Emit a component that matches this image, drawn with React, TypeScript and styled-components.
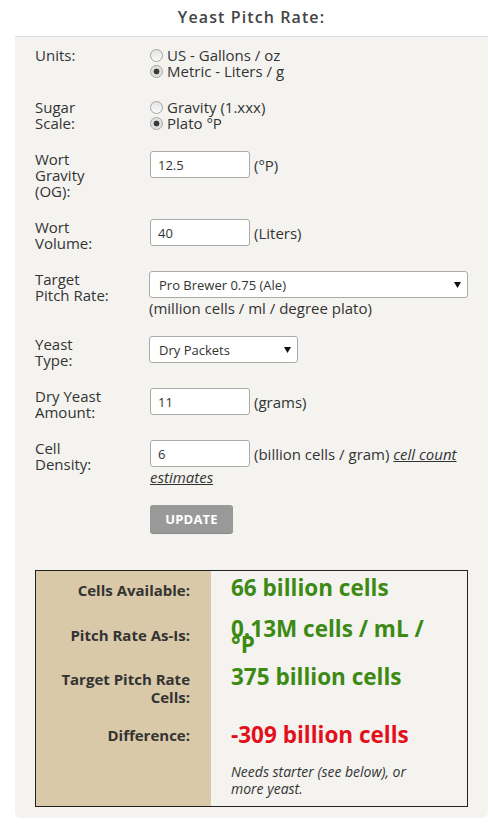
import React from "react";
import styled, { createGlobalStyle } from "styled-components";

const GlobalStyle = createGlobalStyle`
  html, body { margin: 0; padding: 0; background: #fff; }
  body {
    font-family: "Open Sans", "Liberation Sans", sans-serif;
    color: #333;
    font-size: 15px;
    line-height: 16px;
  }
`;

const Panel = styled.section`
  margin: 0 10px 10px 15px;
  background: #f4f3f0;
  border-radius: 0 0 6px 6px;
`;

const Header = styled.h2`
  margin: 0;
  height: 37px;
  box-sizing: border-box;
  padding-bottom: 2px;
  background: #fff;
  border-bottom: 1px solid #dcdcdc;
  display: flex;
  align-items: center;
  justify-content: center;
  font-size: 16px;
  font-weight: 600;
  letter-spacing: 1.1px;
  color: #444;
`;

const Body = styled.div`
  padding: 10px 20px 11px 20px;
`;

const FormRow = styled.div<{ $gap?: number }>`
  display: grid;
  grid-template-columns: 115px 1fr;
  align-items: start;
  margin-bottom: ${(p) => p.$gap ?? 20}px;
`;

const Label = styled.div`
  max-width: 75px;
  line-height: 16px;
`;

const Controls = styled.div`
  line-height: 16px;
`;

const RadioGroup = styled.div`
  display: flex;
  flex-direction: column;
`;

const RadioOption = styled.label`
  display: flex;
  align-items: center;
  gap: 4px;
  height: 16px;
`;

const RadioCircle = styled.span<{ $checked?: boolean }>`
  width: 13px;
  height: 13px;
  box-sizing: border-box;
  border-radius: 50%;
  border: 1px solid #a3a3a3;
  background: ${(p) =>
    p.$checked
      ? "radial-gradient(circle, #3a3a3a 0 2.6px, #d8d8d8 3.2px, #f4f4f4 100%)"
      : "linear-gradient(#e2e2e2, #fbfbfb)"};
  flex: none;
`;

const TextInput = styled.input`
  width: 100px;
  height: 27px;
  box-sizing: border-box;
  border: 1px solid #aaa;
  border-radius: 3px;
  padding: 0 7px;
  font-family: "Open Sans", "Liberation Sans", sans-serif;
  font-size: 13px;
  color: #333;
  background: #fff;
  vertical-align: middle;
  margin: 0;
`;

const Unit = styled.span`
  margin-left: 4px;
  vertical-align: middle;
`;

const SelectWrap = styled.div<{ $w: number }>`
  position: relative;
  width: ${(p) => p.$w}px;
  margin-left: -1px;
`;

const Select = styled.select`
  appearance: none;
  -webkit-appearance: none;
  width: 100%;
  height: 27px;
  box-sizing: border-box;
  border: 1px solid #aaa;
  border-radius: 3px;
  padding: 0 24px 0 9px;
  font-family: "Open Sans", "Liberation Sans", sans-serif;
  font-size: 13px;
  color: #333;
  background: #fff;
  margin: 0;
  display: block;
`;

const Arrow = styled.svg`
  position: absolute;
  right: 7px;
  top: 11px;
  width: 7px;
  height: 6px;
  pointer-events: none;
`;

const Helper = styled.div`
  margin-top: 2px;
  margin-left: -1px;
`;

const Link = styled.a`
  color: #333;
  font-style: italic;
  text-decoration: underline;
`;

const Button = styled.button`
  width: 83px;
  height: 28px;
  border: none;
  border-radius: 3px;
  background: #999;
  box-shadow: 0 1px 0 #8a8a8a;
  color: #fff;
  font-family: "Open Sans", "Liberation Sans", sans-serif;
  font-size: 13px;
  font-weight: 700;
  letter-spacing: 0.2px;
  padding: 0;
`;

const ResultBox = styled.div`
  border: 1px solid #222;
  display: grid;
  grid-template-columns: 175px 1fr;
  grid-template-rows: 41px 48px 58px 36px 52px;
`;

const ResultLabel = styled.div`
  background: #d9c9a8;
  display: flex;
  align-items: center;
  justify-content: flex-end;
  text-align: right;
  padding: 0 21px 2px 12px;
  font-size: 15px;
  font-weight: 700;
  line-height: 18px;
  color: #333;
`;

const ResultValue = styled.div<{ $tone: "good" | "bad" }>`
  padding: 9px 30px 0 20px;
  font-size: 22.5px;
  font-weight: 700;
  line-height: 16px;
  color: ${(p) => (p.$tone === "bad" ? "#e3101b" : "#3c8a14")};
`;

const Note = styled.div`
  display: flex;
  align-items: center;
  padding: 0 30px 0 20px;
  font-style: italic;
  font-size: 14px;
  line-height: 17px;
  color: #333;
`;

const Radio = ({ checked, children }: { checked?: boolean; children: React.ReactNode }) => (
  <RadioOption>
    <RadioCircle $checked={checked} />
    <span>{children}</span>
  </RadioOption>
);

const DropArrow = () => (
  <Arrow viewBox="0 0 7 6">
    <polygon points="0,0 7,0 3.5,6" fill="#111" />
  </Arrow>
);

export default function App() {
  return (
    <>
      <GlobalStyle />
      <Panel>
        <Header>Yeast Pitch Rate:</Header>
        <Body>
          <FormRow>
            <Label>Units:</Label>
            <RadioGroup>
              <Radio>US - Gallons / oz</Radio>
              <Radio checked>Metric - Liters / g</Radio>
            </RadioGroup>
          </FormRow>
          <FormRow>
            <Label>Sugar Scale:</Label>
            <RadioGroup>
              <Radio>Gravity (1.xxx)</Radio>
              <Radio checked>Plato °P</Radio>
            </RadioGroup>
          </FormRow>
          <FormRow>
            <Label>Wort Gravity (OG):</Label>
            <Controls>
              <TextInput defaultValue="12.5" />
              <Unit>(°P)</Unit>
            </Controls>
          </FormRow>
          <FormRow>
            <Label>Wort Volume:</Label>
            <Controls>
              <TextInput defaultValue="40" />
              <Unit>(Liters)</Unit>
            </Controls>
          </FormRow>
          <FormRow>
            <Label>Target Pitch Rate:</Label>
            <Controls>
              <SelectWrap $w={319}>
                <Select defaultValue="pro-ale">
                  <option value="pro-ale">Pro Brewer 0.75 (Ale)</option>
                </Select>
                <DropArrow />
              </SelectWrap>
              <Helper>(million cells / ml / degree plato)</Helper>
            </Controls>
          </FormRow>
          <FormRow>
            <Label>Yeast Type:</Label>
            <Controls>
              <SelectWrap $w={149}>
                <Select defaultValue="dry">
                  <option value="dry">Dry Packets</option>
                </Select>
                <DropArrow />
              </SelectWrap>
            </Controls>
          </FormRow>
          <FormRow>
            <Label>Dry Yeast Amount:</Label>
            <Controls>
              <TextInput defaultValue="11" />
              <Unit>(grams)</Unit>
            </Controls>
          </FormRow>
          <FormRow>
            <Label>Cell Density:</Label>
            <Controls>
              <TextInput defaultValue="6" />
              <Unit>
                (billion cells / gram) <Link href="#">cell count estimates</Link>
              </Unit>
            </Controls>
          </FormRow>
          <FormRow $gap={37}>
            <span />
            <div>
              <Button>UPDATE</Button>
            </div>
          </FormRow>
          <ResultBox>
            <ResultLabel>Cells Available:</ResultLabel>
            <ResultValue $tone="good">66 billion cells</ResultValue>
            <ResultLabel>Pitch Rate As-Is:</ResultLabel>
            <ResultValue $tone="good">0.13M cells / mL / °P</ResultValue>
            <ResultLabel>Target Pitch Rate Cells:</ResultLabel>
            <ResultValue $tone="good">375 billion cells</ResultValue>
            <ResultLabel>Difference:</ResultLabel>
            <ResultValue $tone="bad">-309 billion cells</ResultValue>
            <ResultLabel />
            <Note>Needs starter (see below), or more yeast.</Note>
          </ResultBox>
        </Body>
      </Panel>
    </>
  );
}
